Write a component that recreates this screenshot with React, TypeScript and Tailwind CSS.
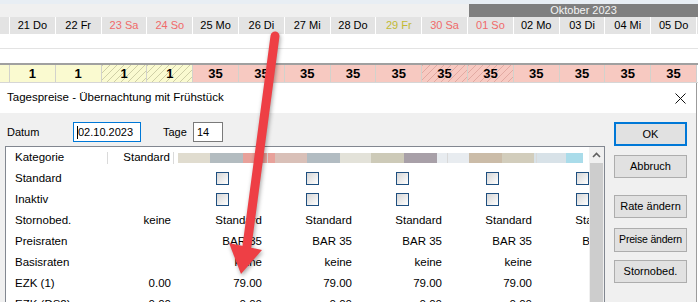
import type { ReactNode } from 'react';

const days = [
  { label: '21 Do', tone: 'text-black', n: '1', bg: 'yellow' },
  { label: '22 Fr', tone: 'text-black', n: '1', bg: 'yellow' },
  { label: '23 Sa', tone: 'text-[#f06a6a]', n: '1', bg: 'yellowHatch' },
  { label: '24 So', tone: 'text-[#f06a6a]', n: '1', bg: 'yellowHatch' },
  { label: '25 Mo', tone: 'text-black', n: '35', bg: 'pink' },
  { label: '26 Di', tone: 'text-black', n: '35', bg: 'pink' },
  { label: '27 Mi', tone: 'text-black', n: '35', bg: 'pink' },
  { label: '28 Do', tone: 'text-black', n: '35', bg: 'pink' },
  { label: '29 Fr', tone: 'text-[#c2b934]', n: '35', bg: 'pink' },
  { label: '30 Sa', tone: 'text-[#f06a6a]', n: '35', bg: 'pinkHatch' },
  { label: '01 So', tone: 'text-[#f06a6a]', n: '35', bg: 'pinkHatch' },
  { label: '02 Mo', tone: 'text-black', n: '35', bg: 'pink' },
  { label: '03 Di', tone: 'text-black', n: '35', bg: 'pink' },
  { label: '04 Mi', tone: 'text-black', n: '35', bg: 'pink' },
  { label: '05 Do', tone: 'text-black', n: '35', bg: 'pink' },
];

// Belegungsfarben der Zahlenzeile, inkl. Schraffur für gesperrte Tage
const cellBg: Record<string, string> = {
  yellow: 'bg-[#fafad0]',
  yellowHatch:
    'bg-[#fafad0] bg-[repeating-linear-gradient(135deg,#cfcfa6_0_1px,transparent_1px_5px)]',
  pink: 'bg-[#f7c9c1]',
  pinkHatch:
    'bg-[#f7c9c1] bg-[repeating-linear-gradient(135deg,#e2aaa2_0_1px,transparent_1px_5px)]',
};

type Cell = 'check' | string;
const rows: { label: string; std: string; cell: Cell }[] = [
  { label: 'Standard', std: '', cell: 'check' },
  { label: 'Inaktiv', std: '', cell: 'check' },
  { label: 'Stornobed.', std: 'keine', cell: 'Standard' },
  { label: 'Preisraten', std: '', cell: 'BAR 35' },
  { label: 'Basisraten', std: '', cell: 'keine' },
  { label: 'EZK (1)', std: '0.00', cell: '79.00' },
  { label: 'EZK (DS2)', std: '0.00', cell: '0.00' },
];

// verpixelte Spaltenköpfe (Zimmernamen unkenntlich gemacht)
const blur: { w: string; c: string }[] = [
  { w: 'w-[4px]', c: 'bg-white' },
  { w: 'w-[32px]', c: 'bg-[#e0dccf]' },
  { w: 'w-[33px]', c: 'bg-[#b3bcc0]' },
  { w: 'w-[24px]', c: 'bg-[#e8a19a]' },
  { w: 'w-px', c: 'bg-[#d9d9d9]' },
  { w: 'w-[7px]', c: 'bg-[#e8a19a]' },
  { w: 'w-[32px]', c: 'bg-[#d9c0b8]' },
  { w: 'w-[33px]', c: 'bg-[#b2bcc2]' },
  { w: 'w-[31px]', c: 'bg-[#e3e2d9]' },
  { w: 'w-[33px]', c: 'bg-[#cdcab8]' },
  { w: 'w-[33px]', c: 'bg-[#a8a0a8]' },
  { w: 'w-[10px]', c: 'bg-[#e8ecf0]' },
  { w: 'w-px', c: 'bg-[#d9d9d9]' },
  { w: 'w-[21px]', c: 'bg-[#e8ecf0]' },
  { w: 'w-[33px]', c: 'bg-[#cbbca8]' },
  { w: 'w-[32px]', c: 'bg-[#d2cdbc]' },
  { w: 'w-[2px]', c: 'bg-[#d8e2e8]' },
  { w: 'w-px', c: 'bg-[#d9d9d9]' },
  { w: 'w-[29px]', c: 'bg-[#d8e2e8]' },
  { w: 'w-[17px]', c: 'bg-[#aadcea]' },
];

export default function App() {
  return (
    <div className="relative h-[302px] w-[698px] overflow-hidden bg-white font-['Liberation_Sans',Arial,sans-serif] text-black">
      <Planner />
      <Dialog />
      <RedArrow />
    </div>
  );
}

function Planner() {
  return (
    <div>
      <div className="h-[4px] bg-[#e8eef4]" />
      <div className="flex h-[13px]">
        <div className="flex-1 bg-[#f0f0f0]" />
        <div className="w-[229px] bg-[#7f7f7f] text-center text-[11px] leading-[13px] text-[#f4f4f4]">
          Oktober 2023
        </div>
      </div>
      <div className="flex h-[17px] bg-[#e3e3e3] text-[11px] leading-[17px]">
        <div className="w-[9px]" />
        <div className="grid w-[688px] grid-cols-15 border-r border-white">
          {days.map((d) => (
            <div key={d.label} className={`border-l border-white text-center ${d.tone}`}>
              {d.label}
            </div>
          ))}
        </div>
      </div>
      <div className="h-[14px]" />
      <div className="h-px bg-[#e3e3e3]" />
      <div className="h-[14px]" />
      <div className="h-[2px] bg-[#a0a0a0]" />
      <div className="flex h-[17px] text-[13px] leading-[17px] font-bold">
        <div className="w-[9px] bg-[#fafad0]" />
        <div className="grid w-[688px] grid-cols-15 border-r border-[#cfcfcf]">
          {days.map((d) => (
            <div key={d.label} className={`border-l border-[#d2d2cc] text-center ${cellBg[d.bg]}`}>
              {d.n}
            </div>
          ))}
        </div>
      </div>
      <div className="h-px bg-[#d6d6d6]" />
    </div>
  );
}

function Dialog() {
  return (
    <div className="h-[219px] w-[697px] border-r border-[#9c9c9c] text-[11.5px]">
      <div className="flex h-[30px] items-center justify-between bg-white pr-[10px] pl-[7px]">
        <span>Tagespreise - Übernachtung mit Frühstück</span>
        <svg width={11} height={11} viewBox="0 0 11 11" aria-hidden>
          <path d="M0.5 0.5 10.5 10.5M10.5 0.5 0.5 10.5" stroke="#111" strokeWidth={1} />
        </svg>
      </div>

      <div className="flex h-[189px] overflow-hidden bg-[#f0f0f0]">
        <div className="w-[614px] shrink-0 pt-[9px] pl-[5px]">
          <div className="flex h-[20px] items-center text-[11px]">
            <span className="w-[68px] pl-[2px]">Datum</span>
            <span className="flex h-[20px] w-[68px] items-center border border-[#0078d7] bg-white pl-[3px]">
              <span className="h-[13px] w-px bg-black" />
              02.10.2023
            </span>
            <span className="ml-[22px] w-[30px]">Tage</span>
            <span className="flex h-[20px] w-[30px] items-center border border-[#7a7a7a] bg-white pl-[3px]">
              14
            </span>
          </div>
          <Table />
        </div>

        <div className="flex w-[73px] flex-col pt-[9px] text-[11px]">
          <Btn primary className="h-[24px]">OK</Btn>
          <Btn className="mt-[9px] h-[23px]">Abbruch</Btn>
          <Btn className="mt-[17px] h-[23px]">Rate ändern</Btn>
          <Btn className="mt-[10px] h-[24px] text-[10.5px] tracking-[-0.2px]">Preise ändern</Btn>
          <Btn className="mt-[8px] h-[23px]">Stornobed.</Btn>
        </div>
      </div>
    </div>
  );
}

function Btn({ children, primary, className }: { children: ReactNode; primary?: boolean; className?: string }) {
  return (
    <div
      className={`flex items-center justify-center overflow-hidden bg-[#e1e1e1] whitespace-nowrap ${
        primary ? 'border-2 border-[#0078d7]' : 'border border-[#adadad]'
      } ${className ?? ''}`}
    >
      {children}
    </div>
  );
}

function Table() {
  return (
    <div className="mt-[4px] flex h-[170px] w-[600px] border-x border-t border-[#828790] bg-white">
      <div className="w-[583px] shrink-0 overflow-hidden">
        <div className="flex h-[21px] items-center">
          <span className="w-[101px] shrink-0 pl-[9px]">Kategorie</span>
          <span className="h-[12px] w-px shrink-0 bg-[#dadada]" />
          <span className="w-[65px] shrink-0 pr-[3px] text-right">Standard</span>
          <span className="h-[12px] w-px shrink-0 bg-[#dadada]" />
          <span className="flex h-[10px] shrink-0">
            {blur.map((b, i) => (
              <span key={i} className={`h-full shrink-0 ${b.w} ${b.c}`} />
            ))}
          </span>
        </div>
        {rows.map((r) => (
          <div key={r.label} className="flex h-[21px] items-center whitespace-nowrap">
            <span className="w-[101px] shrink-0 pl-[9px]">{r.label}</span>
            <span className="w-[70px] shrink-0 pr-[6px] text-right">{r.std}</span>
            {[0, 1, 2, 3, 4].map((i) =>
              r.cell === 'check' ? (
                <span key={i} className="flex w-[90px] shrink-0 justify-center">
                  <span className="size-[13px] border border-[#1f4f7f] bg-gradient-to-br from-[#d6d6d6] to-white" />
                </span>
              ) : (
                <span key={i} className="w-[90px] shrink-0 pr-[5px] text-right">
                  {r.cell}
                </span>
              ),
            )}
          </div>
        ))}
      </div>
      <div className="flex w-[15px] flex-col bg-[#f0f0f0]">
        <div className="flex h-[16px] items-center justify-center">
          <svg width={9} height={6} viewBox="0 0 9 6" aria-hidden>
            <path d="M1 5 4.5 1.5 8 5" fill="none" stroke="#606060" strokeWidth={1.6} />
          </svg>
        </div>
        <div className="mx-px flex-1 bg-[#cdcdcd]" />
      </div>
    </div>
  );
}

/** Anmerkungspfeil aus dem Original-Screenshot, liegt über allem */
function RedArrow() {
  return (
    <svg
      className="pointer-events-none absolute inset-0 drop-shadow-[1px_2px_2px_rgba(0,0,0,0.35)]"
      width={698}
      height={302}
      viewBox="0 0 698 302"
      aria-hidden
    >
      <path d="M275 36 L247 246" stroke="#ee3f45" strokeWidth={9} strokeLinecap="round" />
      <polygon points="229,243 262,250 241,274" fill="#ee3f45" />
    </svg>
  );
}
